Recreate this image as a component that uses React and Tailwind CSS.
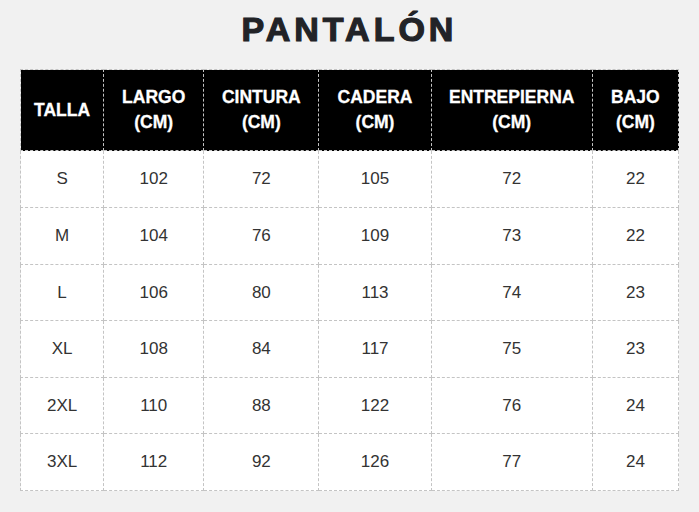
import React from 'react';

const cols = [
  { label: 'TALLA', w: 'w-[83px]' },
  { label: 'LARGO', sub: true, w: 'w-[100px]' },
  { label: 'CINTURA', sub: true, w: 'w-[115px]' },
  { label: 'CADERA', sub: true, w: 'w-[112px]' },
  { label: 'ENTREPIERNA', sub: true, w: 'w-[161px]' },
  { label: 'BAJO', sub: true, w: 'w-[86px]' },
];

const rows = [
  { h: 'h-[57px]', v: ['S', '102', '72', '105', '72', '22'] },
  { h: 'h-[57px]', v: ['M', '104', '76', '109', '73', '22'] },
  { h: 'h-[56px]', v: ['L', '106', '80', '113', '74', '23'] },
  { h: 'h-[57px]', v: ['XL', '108', '84', '117', '75', '23'] },
  { h: 'h-[56px]', v: ['2XL', '110', '88', '122', '76', '24'] },
  { h: 'h-[57px]', v: ['3XL', '112', '92', '126', '77', '24'] },
];

export default function App() {
  return (
    <div className="min-h-screen w-[699px] h-[512px] bg-[#f1f1f1] font-['Liberation_Sans',Arial,sans-serif] overflow-hidden">
      <h1 className="pt-[9px] text-center text-[34px] leading-[40px] font-bold tracking-[4px] text-[#222327] [-webkit-text-stroke:1.2px_#222327]">
        PANTALÓN
      </h1>
      <div className="px-[20px] pt-[20px]">
        <table className="w-[659px] border-collapse table-fixed text-center">
          <thead>
            <tr className="h-[81px]">
              {cols.map((c) => (
                <th key={c.label} className={`${c.w} bg-black text-white font-bold text-[17.5px] leading-[25px] border border-dashed border-[#c4c4c4] p-0 [-webkit-text-stroke:0.3px_#ffffff]`}>
                  {c.label}
                  {c.sub && <><br />(CM)</>}
                </th>
              ))}
            </tr>
          </thead>
          <tbody>
            {rows.map((r) => (
              <tr key={r.v[0]} className={`${r.h} bg-white`}>
                {r.v.map((x, i) => (
                  <td key={i} className="border border-dashed border-[#c4c4c4] text-[17px] text-[#333333] p-0">
                    {x}
                  </td>
                ))}
              </tr>
            ))}
          </tbody>
        </table>
      </div>
    </div>
  );
}
